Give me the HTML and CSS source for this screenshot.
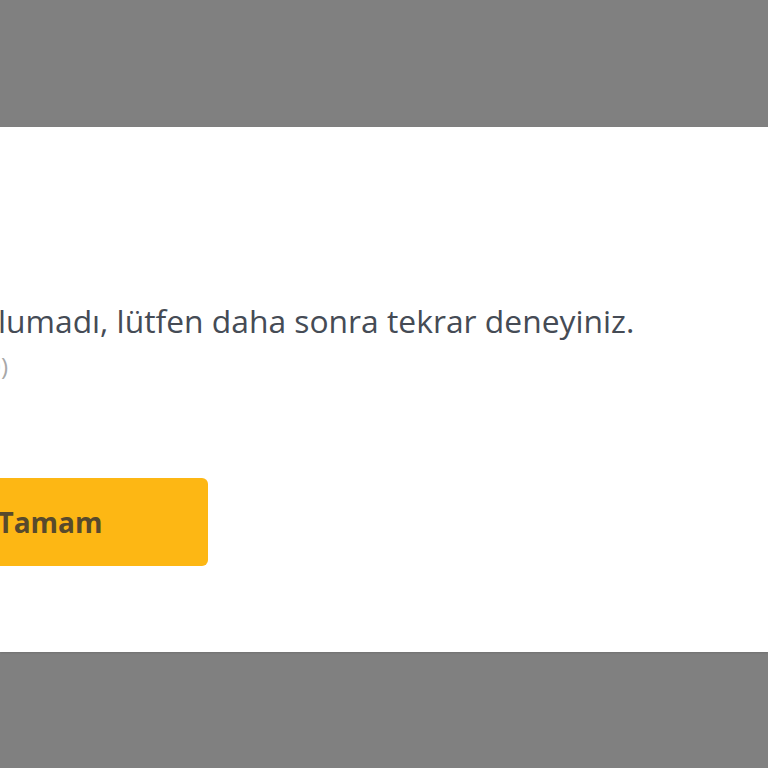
FILE: index.html
```html
<!DOCTYPE html>
<html lang="tr">
<head>
<meta charset="utf-8">
<link rel="stylesheet" href="styles.css">
<title>Hata</title>
</head>
<body>
<div class="overlay">
  <div class="modal">
    <div class="content">
      <p class="message">lumadı, lütfen daha sonra tekrar deneyiniz.</p>
      <p class="code">(Hata kodu: 0)</p>
      <div class="actions">
        <button class="btn">Tamam</button>
      </div>
    </div>
  </div>
</div>
</body>
</html>
```
FILE: styles.css
```css
html, body {
  margin: 0;
  padding: 0;
  background: #808080;
  overflow: hidden;
}
.overlay {
  width: 768px;
  height: 768px;
  display: flex;
  flex-direction: column;
  padding-top: 127px;
  box-sizing: border-box;
}
.modal {
  background: #ffffff;
  height: 525px;
  box-shadow: 0 1px 2px rgba(0,0,0,0.12);
  overflow: hidden;
  font-family: "Open Sans", "Liberation Sans", sans-serif;
}
.content {
  padding-top: 173px;
  display: flex;
  flex-direction: column;
}
.message {
  margin: 0;
  font-size: 31.8px;
  line-height: 42px;
  color: #454b55;
  white-space: nowrap;
  margin-left: -2px;
}
.code {
  margin: 8px 0 0 0;
  font-size: 24px;
  line-height: 32px;
  color: #a8a8a8;
  white-space: nowrap;
  align-self: flex-start;
  margin-left: -148px;
}
.actions {
  margin-top: 96px;
  display: flex;
}
.btn {
  width: 316px;
  height: 88px;
  margin-left: -108px;
  border: none;
  border-radius: 6px;
  background: #fdb714;
  color: #584a2c;
  font-family: "Open Sans", "Liberation Sans", sans-serif;
  font-weight: 700;
  font-size: 28px;
  padding: 0;
  text-align: center;
}
```
